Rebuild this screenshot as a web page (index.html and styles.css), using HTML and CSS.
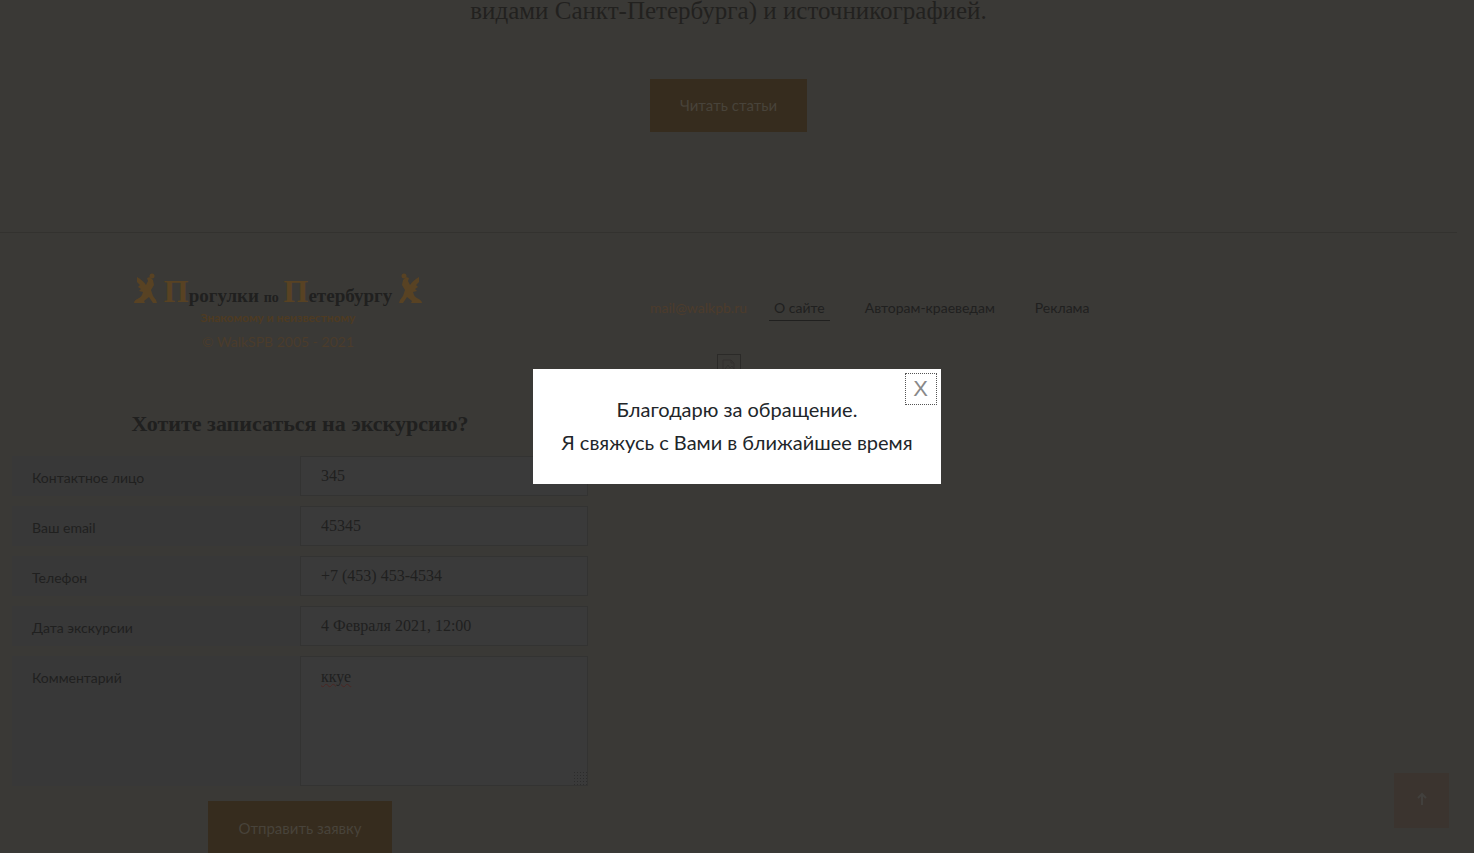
FILE: index.html
```html
<!DOCTYPE html>
<html lang="ru">
<head>
<meta charset="utf-8">
<meta name="viewport" content="width=device-width, initial-scale=1">
<title>Прогулки по Петербургу</title>
<link rel="stylesheet" href="styles.css">
</head>
<body>
<div class="page">
  <main class="intro">
    <p class="intro-text">видами Санкт-Петербурга) и источникографией.</p>
    <a class="button" href="#articles">Читать статьи</a>
  </main>
  <footer class="footer">
    <div class="footer-top">
      <div class="brand">
        <a class="logo" href="#home">
          <svg class="griffin" viewBox="0 0 24 32" aria-hidden="true"><path d="M3 4C7 6 10 9 12 12L14 8 13 5 16 4 19 7 20 12 17 17 19 23 22 27 23 30H19L15 24 10 28 11 30H0C0 26 6 26 8 22L9 19 5 18 7 16 4 14 6 12 3 9Z"/><circle cx="18" cy="3" r="2.5"/></svg>
          <span class="logo-name"><b class="cap">П</b>рогулки <small>по</small> <b class="cap">П</b>етербургу</span>
          <svg class="griffin flipped" viewBox="0 0 24 32" aria-hidden="true"><path d="M3 4C7 6 10 9 12 12L14 8 13 5 16 4 19 7 20 12 17 17 19 23 22 27 23 30H19L15 24 10 28 11 30H0C0 26 6 26 8 22L9 19 5 18 7 16 4 14 6 12 3 9Z"/><circle cx="18" cy="3" r="2.5"/></svg>
        </a>
        <p class="tagline">Знакомому и неизвестному</p>
        <p class="copyright">© WalkSPB 2005 - 2021</p>
      </div>
      <div class="contacts">
        <nav class="nav">
          <a class="mail" href="mailto:mail@walkpb.ru">mail@walkpb.ru</a>
          <a class="nav-link current" href="#about">О сайте</a>
          <a class="nav-link" href="#authors">Авторам-краеведам</a>
          <a class="nav-link" href="#ads">Реклама</a>
        </nav>
        <span class="counter"><svg viewBox="0 0 16 16" aria-hidden="true"><path d="M2 2h8l3 3v9H2zM10 2v3h3M4 11l3-4 2 3 2-2 2 3"/></svg></span>
      </div>
    </div>
    <form class="form">
      <h2 class="form-title">Хотите записаться на экскурсию?</h2>
      <div class="row"><label for="person">Контактное лицо</label><input id="person" value="345"></div>
      <div class="row"><label for="email">Ваш email</label><input id="email" value="45345"></div>
      <div class="row"><label for="phone">Телефон</label><input id="phone" value="+7 (453) 453-4534"></div>
      <div class="row"><label for="date">Дата экскурсии</label><input id="date" value="4 Февраля 2021, 12:00"></div>
      <div class="row"><label for="comment">Комментарий</label><textarea id="comment">ккуе</textarea></div>
      <button class="button" type="submit">Отправить заявку</button>
    </form>
  </footer>
</div>
<button class="to-top" type="button" aria-label="Наверх"><svg viewBox="0 0 14 16" aria-hidden="true"><path d="M7 14V3M3 7l4-4 4 4"/></svg></button>
<div class="modal-layer">
  <div class="modal" role="dialog" aria-modal="true">
    <button class="close" type="button" aria-label="Закрыть">X</button>
    <p>Благодарю за обращение.</p>
    <p>Я свяжусь с Вами в ближайшее время</p>
  </div>
</div>
</body>
</html>
```
FILE: styles.css
```css
* { box-sizing: border-box; }
body {
  margin: 0;
  overflow: hidden;
  background: #3a3936;
  color: #20201f;
  font-family: Lato, sans-serif;
  font-size: 14px;
  line-height: 20px;
}
p, h2 { margin: 0; }
a { color: inherit; text-decoration: none; }
.page { padding-right: 17px; }
.intro {
  display: flex;
  flex-direction: column;
  align-items: center;
  gap: 58px;
  padding-bottom: 100px;
  border-bottom: 1px solid #33322f;
}
.intro-text {
  font: 25px/21px "Liberation Serif", serif;
  color: #22211f;
}
.button {
  height: 53px;
  padding: 0 30px;
  border: 0;
  background: #362c1e;
  color: #48433a;
  font: 15px/52px Lato, sans-serif;
}
.footer-top {
  display: flex;
  padding-top: 38px;
}
.brand {
  width: 556px;
  text-align: center;
}
.logo {
  display: flex;
  justify-content: center;
  align-items: center;
  gap: 6px;
  height: 36px;
}
.griffin {
  width: 24px;
  height: 32px;
  fill: #584223;
}
.flipped { transform: scaleX(-1); }
.logo-name {
  padding-top: 10px;
  font: bold 19px/36px "Liberation Serif", serif;
}
.logo-name small { font-size: 14px; }
.cap {
  color: #584223;
  font-size: 32px;
}
.tagline {
  color: #4e3b22;
  font-size: 12px;
  font-weight: bold;
  line-height: 22px;
}
.copyright {
  color: #4b3c2b;
  line-height: 26px;
}
.contacts {
  padding-top: 25px;
  padding-left: 94px;
}
.nav {
  display: flex;
}
.mail {
  margin-right: 22px;
  color: #4d3c2c;
  line-height: 24px;
}
.nav-link {
  margin-right: 30px;
  padding: 0 5px;
  line-height: 24px;
}
.nav-link.current { border-bottom: 1px solid #20201f; }
.counter {
  display: block;
  width: 24px;
  height: 24px;
  margin-top: 33px;
  margin-left: 67px;
  border: 1px solid #2b2a28;
}
.counter svg {
  display: block;
  width: 16px;
  margin: 3px;
  fill: none;
  stroke: #32312f;
}
.form {
  display: flex;
  flex-direction: column;
  align-items: center;
  gap: 10px;
  width: 600px;
  padding: 28px 12px 0;
}
.form-title {
  font: bold 22px/36px "Liberation Serif", serif;
  margin-bottom: 4px;
}
.row {
  display: grid;
  grid-template-columns: 1fr 1fr;
  width: 100%;
}
.row label {
  padding: 12px 20px 8px;
  background: #383838;
}
.row input,
.row textarea {
  display: block;
  width: 100%;
  height: 40px;
  margin: 0;
  padding: 0 20px;
  border: 1px solid #333332;
  border-radius: 0;
  background: #3a3a3a;
  color: #20201f;
  font: 16px/20px "Liberation Serif", serif;
}
.row textarea {
  height: 130px;
  padding: 10px 20px;
  text-decoration: underline wavy #4a2522 1px;
}
.row textarea::-webkit-resizer {
  background: repeating-linear-gradient(90deg, #3a3a3a 0 2px, transparent 2px 3px),
    repeating-linear-gradient(#3a3a3a 0 2px, #2c2c2c 2px 3px);
  clip-path: polygon(100% 30%, 100% 100%, 30% 100%);
}
.form .button { margin-top: 5px; }
.to-top {
  position: fixed;
  right: 25px;
  bottom: 25px;
  width: 55px;
  height: 55px;
  padding: 0;
  border: 0;
  background: #3b342f;
}
.to-top svg {
  width: 14px;
  fill: none;
  stroke: #42403d;
  stroke-width: 2;
}
.modal-layer {
  position: fixed;
  inset: 0;
  display: flex;
  align-items: center;
  justify-content: center;
}
.modal {
  position: relative;
  padding: 24px 28px 25px;
  background: #fff;
  color: #212529;
  font-size: 20px;
  line-height: 33px;
  text-align: center;
}
.close {
  position: absolute;
  top: 4px;
  right: 4px;
  width: 32px;
  height: 32px;
  padding: 0;
  border: 1px dotted #555;
  background: #fff;
  color: #888;
  font: 22px/30px "Liberation Sans", sans-serif;
}
```
